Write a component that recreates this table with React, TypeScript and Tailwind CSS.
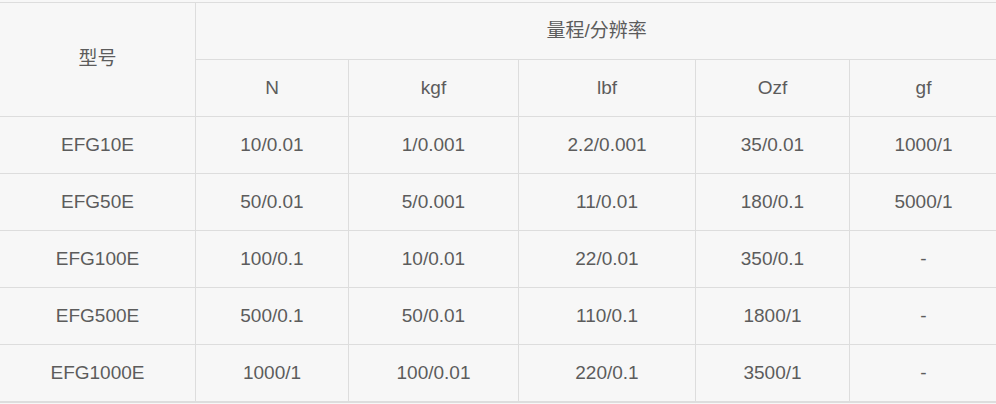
const units = ["N", "kgf", "lbf", "Ozf", "gf"];

const rows = [
  ["EFG10E", "10/0.01", "1/0.001", "2.2/0.001", "35/0.01", "1000/1"],
  ["EFG50E", "50/0.01", "5/0.001", "11/0.01", "180/0.1", "5000/1"],
  ["EFG100E", "100/0.1", "10/0.01", "22/0.01", "350/0.1", "-"],
  ["EFG500E", "500/0.1", "50/0.01", "110/0.1", "1800/1", "-"],
  ["EFG1000E", "1000/1", "100/0.01", "220/0.1", "3500/1", "-"],
];

const cell = "border border-[#dddddd] text-center align-middle p-0";

export default function App() {
  return (
    <div
      className="w-[996px] h-[404px] bg-[#f7f7f7] pt-[2px] overflow-hidden text-[19px] text-[#5c5c5c]"
      style={{ fontFamily: '"Liberation Sans", Arial, "Noto Sans CJK SC", sans-serif' }}
    >
      <table className="w-[998px] -ml-px border-collapse table-fixed border-b-2 border-b-[#dddddd]">
        <colgroup>
          <col className="w-[196px]" />
          <col className="w-[153px]" />
          <col className="w-[170px]" />
          <col className="w-[177px]" />
          <col className="w-[154px]" />
          <col className="w-[148px]" />
        </colgroup>
        <thead>
          <tr className="h-[57px]">
            <th rowSpan={2} className={`${cell} font-normal`}>
              型号
            </th>
            <th colSpan={5} className={`${cell} font-normal`}>
              量程/分辨率
            </th>
          </tr>
          <tr className="h-[57px]">
            {units.map((u) => (
              <th key={u} className={`${cell} font-normal`}>
                {u}
              </th>
            ))}
          </tr>
        </thead>
        <tbody>
          {rows.map((r) => (
            <tr key={r[0]} className="h-[57px]">
              {r.map((v, i) => (
                <td key={i} className={cell}>
                  {v}
                </td>
              ))}
            </tr>
          ))}
        </tbody>
      </table>
    </div>
  );
}
